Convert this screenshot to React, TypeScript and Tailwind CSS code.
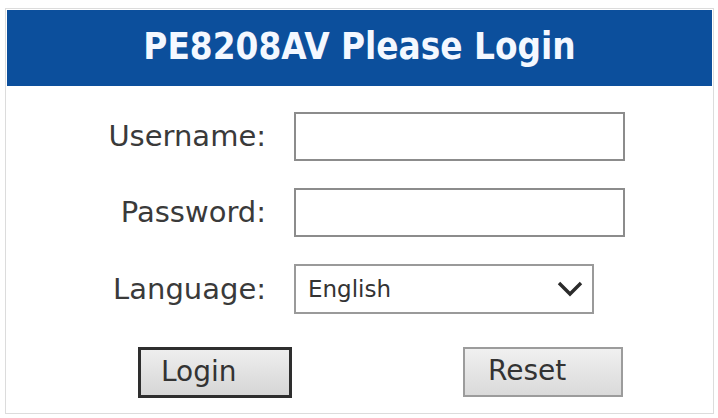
import React from "react";

const font = { fontFamily: '"DejaVu Sans", Verdana, sans-serif' };

function Chevron() {
  return (
    <svg width="26" height="16" viewBox="0 0 26 16" className="shrink-0">
      <path d="M2 2 L13 13 L24 2" fill="none" stroke="#2b2b2b" strokeWidth="3.4" strokeLinejoin="miter" />
    </svg>
  );
}

export default function App() {
  return (
    <div className="w-[718px] h-[418px] bg-white pt-[8px] pl-[5px]" style={font}>
      <div className="w-[709px] h-[406px] border border-[#dcdcdc] p-px flex flex-col">
        <div className="h-[76px] bg-[#0c4f9c] flex items-center justify-center">
          <h1 className="text-[#f4f8ff] font-bold text-[36.5px] leading-none font-stretch-condensed pb-[1px]">PE8208AV Please Login</h1>
        </div>

        <div className="grid grid-cols-[259px_331px] gap-x-[28px] gap-y-[27px] mt-[26px] text-[#3a3a3a]">
          <label className="text-[29px] leading-none self-center text-right">Username:</label>
          <div className="h-[49px] border-2 border-[#8c8c8c] bg-white" />

          <label className="text-[29px] leading-none self-center text-right">Password:</label>
          <div className="h-[49px] border-2 border-[#8c8c8c] bg-white" />

          <label className="text-[29px] leading-none self-center text-right">Language:</label>
          <div className="w-[300px] h-[50px] border-2 border-[#9a9a9a] bg-white flex items-center justify-between pl-[12px] pr-[9px]">
            <span className="text-[23px] leading-none text-[#333]">English</span>
            <Chevron />
          </div>
        </div>

        <div className="flex mt-[33px]">
          <button className="ml-[131px] w-[154px] h-[51px] border-[3px] border-[#2e2e2e] bg-gradient-to-b from-[#eeeeee] to-[#d6d6d6] text-[28px] leading-none text-[#333] text-left pl-[20px] pb-[2px]">
            Login
          </button>
          <button className="ml-[171px] w-[160px] h-[50px] border-2 border-[#9c9c9c] bg-gradient-to-b from-[#f0f0f0] to-[#dadada] text-[28px] leading-none text-[#333] text-left pl-[23px] pb-[2px]">
            Reset
          </button>
        </div>
      </div>
    </div>
  );
}
